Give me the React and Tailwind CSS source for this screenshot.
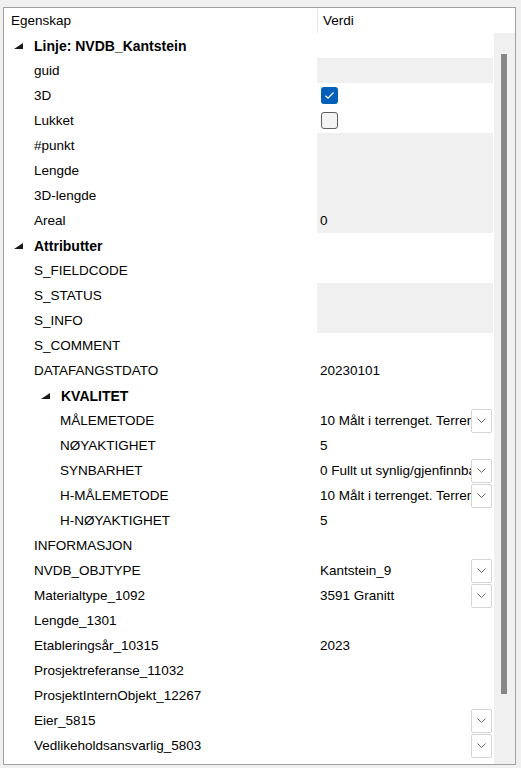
const rows = [
  { label: "Linje: NVDB_Kantstein", group: true, indent: "root" },
  { label: "guid", gray: true },
  { label: "3D", checkbox: "on" },
  { label: "Lukket", checkbox: "off" },
  { label: "#punkt", gray: true },
  { label: "Lengde", gray: true },
  { label: "3D-lengde", gray: true },
  { label: "Areal", gray: true, value: "0" },
  { label: "Attributter", group: true, indent: "root" },
  { label: "S_FIELDCODE" },
  { label: "S_STATUS", gray: true },
  { label: "S_INFO", gray: true },
  { label: "S_COMMENT" },
  { label: "DATAFANGSTDATO", value: "20230101" },
  { label: "KVALITET", group: true, indent: "sub" },
  { label: "MÅLEMETODE", indent: "deep", value: "10 Målt i terrenget. Terrengmålt", dropdown: true },
  { label: "NØYAKTIGHET", indent: "deep", value: "5" },
  { label: "SYNBARHET", indent: "deep", value: "0 Fullt ut synlig/gjenfinnbar", dropdown: true },
  { label: "H-MÅLEMETODE", indent: "deep", value: "10 Målt i terrenget. Terrengmålt", dropdown: true },
  { label: "H-NØYAKTIGHET", indent: "deep", value: "5" },
  { label: "INFORMASJON" },
  { label: "NVDB_OBJTYPE", value: "Kantstein_9", dropdown: true },
  { label: "Materialtype_1092", value: "3591 Granitt", dropdown: true },
  { label: "Lengde_1301" },
  { label: "Etableringsår_10315", value: "2023" },
  { label: "Prosjektreferanse_11032" },
  { label: "ProsjektInternObjekt_12267" },
  { label: "Eier_5815", dropdown: true },
  { label: "Vedlikeholdsansvarlig_5803", dropdown: true },
];

const Expander = () => (
  <svg width="9" height="6" viewBox="0 0 9 6" className="shrink-0 mt-[1px]">
    <polygon points="0,6 9,6 9,0" fill="#1a1a1a" />
  </svg>
);

const Chevron = () => (
  <svg width="9" height="5" viewBox="0 0 9 5">
    <path d="M0.5 0.5 L4.5 4.5 L8.5 0.5" fill="none" stroke="#6b6b6b" strokeWidth="1" />
  </svg>
);

const Checkbox = ({ checked }) =>
  checked ? (
    <div className="ml-[1px] w-[17px] h-[17px] rounded-[3px] bg-[#005fb8] flex items-center justify-center">
      <svg width="11" height="9" viewBox="0 0 11 9">
        <path d="M1.5 4.8 L4 7.2 L9.5 1.5" fill="none" stroke="#ffffff" strokeWidth="1.3" />
      </svg>
    </div>
  ) : (
    <div className="ml-[1px] w-[17px] h-[17px] rounded-[3px] border border-[#5f5f5f] bg-[#f3f3f3]" />
  );

const Row = ({ r }) => {
  const labelPad =
    r.indent === "root"
      ? "pl-[10px]"
      : r.indent === "sub"
      ? "pl-[37px]"
      : r.indent === "deep"
      ? "pl-[56px]"
      : "pl-[30px]";

  return (
    <div className="flex h-[25px]">
      <div className={`w-[313px] flex items-center ${labelPad}`}>
        {r.group && <Expander />}
        <span
          className={
            r.group
              ? "ml-[11px] pt-[2px] font-bold text-[14px] whitespace-nowrap"
              : "pt-[2px] whitespace-nowrap"
          }
        >
          {r.label}
        </span>
      </div>
      <div
        className={`w-[176px] flex items-center pl-[3px] ${
          r.gray ? "bg-[#f0f0f0]" : ""
        }`}
      >
        {r.checkbox && <Checkbox checked={r.checkbox === "on"} />}
        <span className="flex-1 pt-[2px] overflow-hidden whitespace-nowrap">
          {r.value}
        </span>
        {r.dropdown && (
          <div className="w-[21px] h-[24px] mr-[1px] shrink-0 rounded-[2px] border border-[#d4d4d4] bg-white flex items-center justify-center">
            <Chevron />
          </div>
        )}
      </div>
    </div>
  );
};

export default function App() {
  return (
    <div
      className="w-[521px] h-[768px] bg-[#f0f0f0] pt-[7px] pl-[3px] text-[13.5px] text-black"
      style={{ fontFamily: '"Liberation Sans", Arial, sans-serif' }}
    >
      <div className="w-[513px] h-[758px] border border-[#a0a0a0] bg-white flex flex-col">
        {/* header */}
        <div className="flex h-[25px] shrink-0">
          <div className="w-[313px] flex items-center pl-[7px] pt-[2px]">Egenskap</div>
          <div className="w-[1px] bg-[#e5e5e5]" />
          <div className="flex-1 flex items-center pl-[5px] pt-[2px]">Verdi</div>
        </div>
        {/* body */}
        <div className="flex flex-1 overflow-hidden">
          <div className="w-[489px] flex flex-col">
            {rows.map((r) => (
              <Row key={r.label} r={r} />
            ))}
          </div>
          <div className="w-[22px] ml-[1px] bg-[#f0f0f0] pt-[21px] pl-[7px]">
            <div className="w-[6px] h-[640px] bg-[#868686]" />
          </div>
        </div>
      </div>
    </div>
  );
}
